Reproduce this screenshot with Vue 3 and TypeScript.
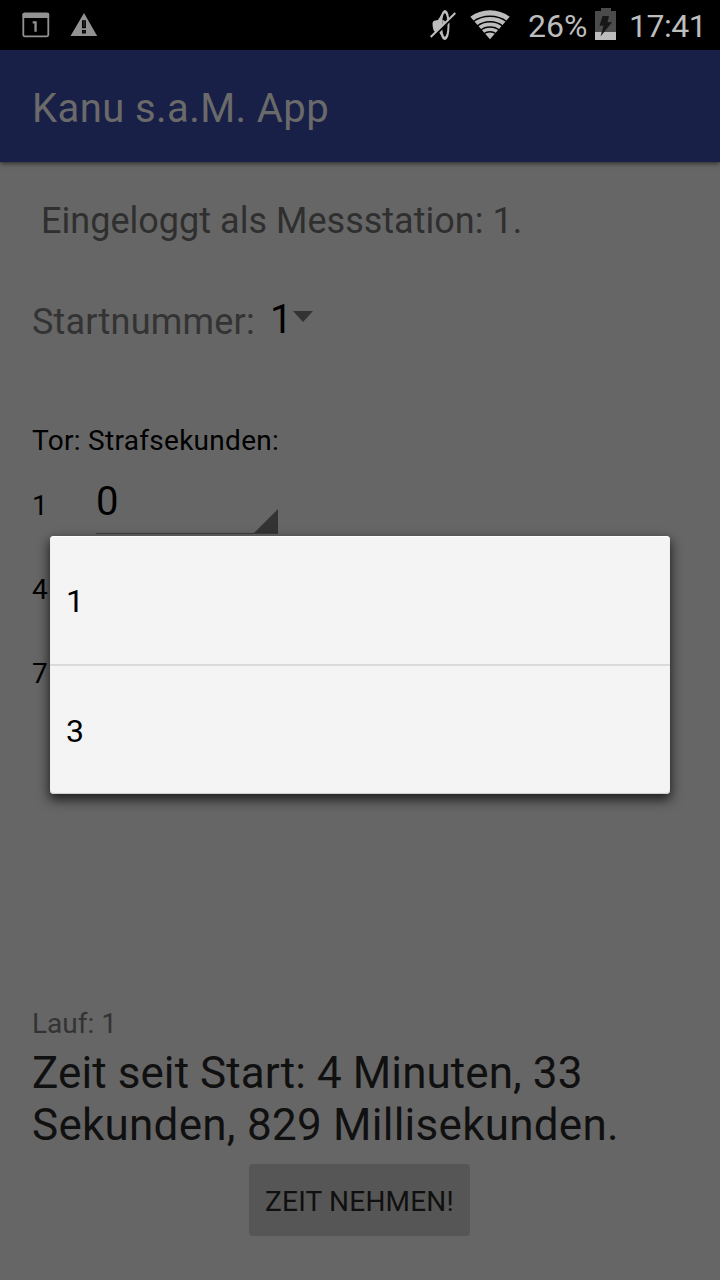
<script setup lang="ts">
import { ref } from 'vue'

interface Gate {
  id: number
  penalty: number
}

const startNumbers = ref<number[]>([1, 3])
const gates = ref<Gate[]>([
  { id: 1, penalty: 0 },
  { id: 4, penalty: 0 },
  { id: 7, penalty: 0 },
])
</script>

<template>
  <div class="screen">
    <div class="status">
      <svg class="ic-cal" width="28" height="26" viewBox="0 0 28 26">
        <rect x="1.3" y="1.5" width="25" height="22.8" rx="1.5" fill="none" stroke="#929292" stroke-width="1.8" />
        <rect x="0.6" y="1" width="26.6" height="5" rx="1" fill="#929292" />
        <path d="M10.700 9.300h4v10.500h-2.300v-8.200h-1.700z" fill="#929292" />
      </svg>
      <svg class="ic-warn" width="28" height="24" viewBox="0 0 28 24">
        <path d="M14 0L27.2 23H0.5z" fill="#929292" />
        <path d="M12 7.300h3.900v8H12zM12 17h3.900v3.500H12z" fill="#000" />
        <path d="M13.400 8h1.200v6h-1.200zM13.400 18h1.200v1.500h-1.200z" fill="#333" />
      </svg>
      <div class="gap"></div>
      <svg class="ic-mute" width="28" height="32" viewBox="0 0 28 32">
        <path d="M2.500 14Q3 11.500 5 11.500L8 11Q10 8 11.500 5Q13 1 15.300 1Q19.500 2 19.500 16T15 31Q12.500 31 11 26.500L9 23H5Q2.500 21 2.500 14z" fill="#bdbdbd" />
        <ellipse cx="14.800" cy="16" rx="2.700" ry="11.800" fill="#000" />
        <path d="M12.300 11Q15.500 11 15.500 15L12.300 18z" fill="#bdbdbd" />
        <path d="M2 29L26 5" stroke="#000" stroke-width="2.600" />
        <path d="M0.700 28L25.300 4" stroke="#bdbdbd" stroke-width="2.100" />
      </svg>
      <svg class="ic-wifi" width="40" height="30" viewBox="0 0 40 30">
        <path d="M20 29.300L0.300 6.800Q8.800 0.300 20 0.300T39.700 6.800z" fill="#bdbdbd" />
        <g fill="none" stroke="#000" stroke-width="1.400">
          <path d="M3 11.700Q10.500 6.300 20 6.300T37 11.700" />
          <path d="M7 16.200Q12.500 11.800 20 11.800T33 16.200" />
          <path d="M10.500 20.200Q14.500 17 20 17T29.500 20.200" />
          <path d="M14 23.800Q16.500 21.800 20 21.800T26 23.800" />
        </g>
      </svg>
      <span class="pct">26%</span>
      <svg class="ic-bat" width="22" height="32" viewBox="0 0 22 32">
        <path d="M6 0h10v3h5v21H0V3h6z" fill="#4b4b4b" />
        <path d="M0 24h21v8H0z" fill="#bdbdbd" />
        <path d="M7.500 8H14L12.500 14.200H17L5.500 28.500L8.500 17.800H4.500z" fill="#171717" />
      </svg>
      <span class="clock">17:41</span>
    </div>

    <header class="bar"><h1>Kanu s.a.M. App</h1></header>

    <main class="content">
      <p class="login">Eingeloggt als Messstation: 1.</p>
      <div class="start">
        <span class="start-label">Startnummer:</span>
        <span class="start-value">1</span>
        <svg class="caret" width="20" height="11" viewBox="0 0 20 11"><path d="M0 0h20L10 11z" fill="#333" /></svg>
      </div>
      <p class="heads">Tor: Strafsekunden:</p>
      <div class="gates">
        <div v-for="g in gates" :key="g.id" class="gate">
          <span class="gate-id">{{ g.id }}</span>
          <div v-if="g.id === 1" class="spinner">
            <span>{{ g.penalty }}</span>
            <svg class="corner" width="24" height="24" viewBox="0 0 24 24"><path d="M24 0v24H0z" fill="#333" /></svg>
          </div>
        </div>
      </div>
      <p class="run">Lauf: 1</p>
      <p class="time">Zeit seit Start: 4 Minuten, 33<br /><span class="line2">Sekunden, 829 Millisekunden.</span></p>
      <button class="take" type="button">ZEIT NEHMEN!</button>
    </main>

    <ul class="popup">
      <li v-for="n in startNumbers" :key="n">{{ n }}</li>
    </ul>
  </div>
</template>

<style>
body {
  margin: 0;
  background: #666;
}
</style>

<style scoped>
.screen {
  position: relative;
  width: 720px;
  height: 1280px;
  overflow: hidden;
  background: #666;
  color: #000;
  font-family: Roboto, "Noto Sans", sans-serif;
  display: flex;
  flex-direction: column;
}
p, h1, ul { margin: 0; padding: 0; font-weight: 400; }
svg { display: block; flex: none; }
.status {
  height: 50px;
  flex: none;
  box-sizing: border-box;
  background: #000;
  color: #bdbdbd;
  display: flex;
  align-items: flex-start;
  padding-left: 22px;
  font-size: 32px;
  line-height: 36px;
}
.ic-cal { margin-top: 12px; }
.ic-warn { margin: 13px 0 0 20px; }
.gap { flex: 1; }
.ic-mute { margin: 9px 12px 0 0; }
.ic-wifi { margin-top: 10px; }
.pct { width: 67px; margin-left: 18px; padding-top: 8px; white-space: nowrap; }
.ic-bat { margin-top: 8px; }
.clock { width: 91px; margin-left: 12px; padding-top: 8px; letter-spacing: -0.5px; white-space: nowrap; }
.bar {
  height: 112px;
  flex: none;
  box-sizing: border-box;
  padding: 6px 0 0 32px;
  background: #192047;
  display: flex;
  align-items: center;
  box-shadow: 0 1px 5px rgba(0, 0, 0, 0.65);
}
h1 { font-size: 40px; line-height: 48px; letter-spacing: 0.42px; color: #6a6a6a; white-space: nowrap; }
.content {
  flex: 1;
  display: flex;
  flex-direction: column;
  padding-left: 32px;
  white-space: nowrap;
}
.login { margin: 37px 0 0 9px; font-size: 36px; line-height: 44px; letter-spacing: 0.02px; color: #2f2f2f; }
.start { margin-top: 57px; height: 44px; display: flex; align-items: flex-start; }
.start-label { width: 238px; font-size: 36px; line-height: 44px; letter-spacing: 0.2px; color: #333; }
.start-value { width: 23px; margin-top: -2px; font-size: 40px; line-height: 44px; }
.caret { margin-top: 11px; }
.heads { margin-top: 81px; font-size: 28px; line-height: 32px; letter-spacing: 0.3px; }
.gates { margin-top: 21px; height: 530px; }
.gate { height: 84px; display: flex; align-items: flex-start; }
.gate-id { width: 64px; padding-top: 12px; font-size: 28px; line-height: 32px; }
.spinner {
  width: 182px;
  height: 56px;
  box-sizing: border-box;
  border-bottom: 1px solid #3d3d3d;
  display: flex;
  justify-content: space-between;
  font-size: 40px;
  line-height: 48px;
}
.corner { margin-top: 31px; }
.run { font-size: 28px; line-height: 32px; color: #333; }
.time { margin-top: 7px; font-size: 44px; line-height: 52px; letter-spacing: 0.08px; color: #101010; }
.line2 { letter-spacing: 0.26px; }
.take {
  width: 221px;
  height: 72px;
  margin: 13px 0 0 217px;
  padding: 4px 0 0;
  border: 0;
  border-radius: 4px;
  background: #565656;
  color: #101010;
  font: 28px/32px Roboto, "Noto Sans", sans-serif;
  letter-spacing: 0.2px;
}
.popup {
  position: absolute;
  left: 50px;
  top: 536px;
  width: 620px;
  height: 258px;
  box-sizing: border-box;
  list-style: none;
  border-radius: 4px;
  background: #f4f4f4;
  box-shadow: inset 0 -1px 1px #ccc, inset 0 1px 0 #fff, 0 5px 12px 1px rgba(0, 0, 0, 0.7);
}
.popup li {
  height: 128px;
  padding: 2px 16px 0;
  box-sizing: border-box;
  font-size: 32px;
  line-height: 126px;
}
.popup li + li { height: 130px; border-top: 2px solid #dadada; }
</style>
